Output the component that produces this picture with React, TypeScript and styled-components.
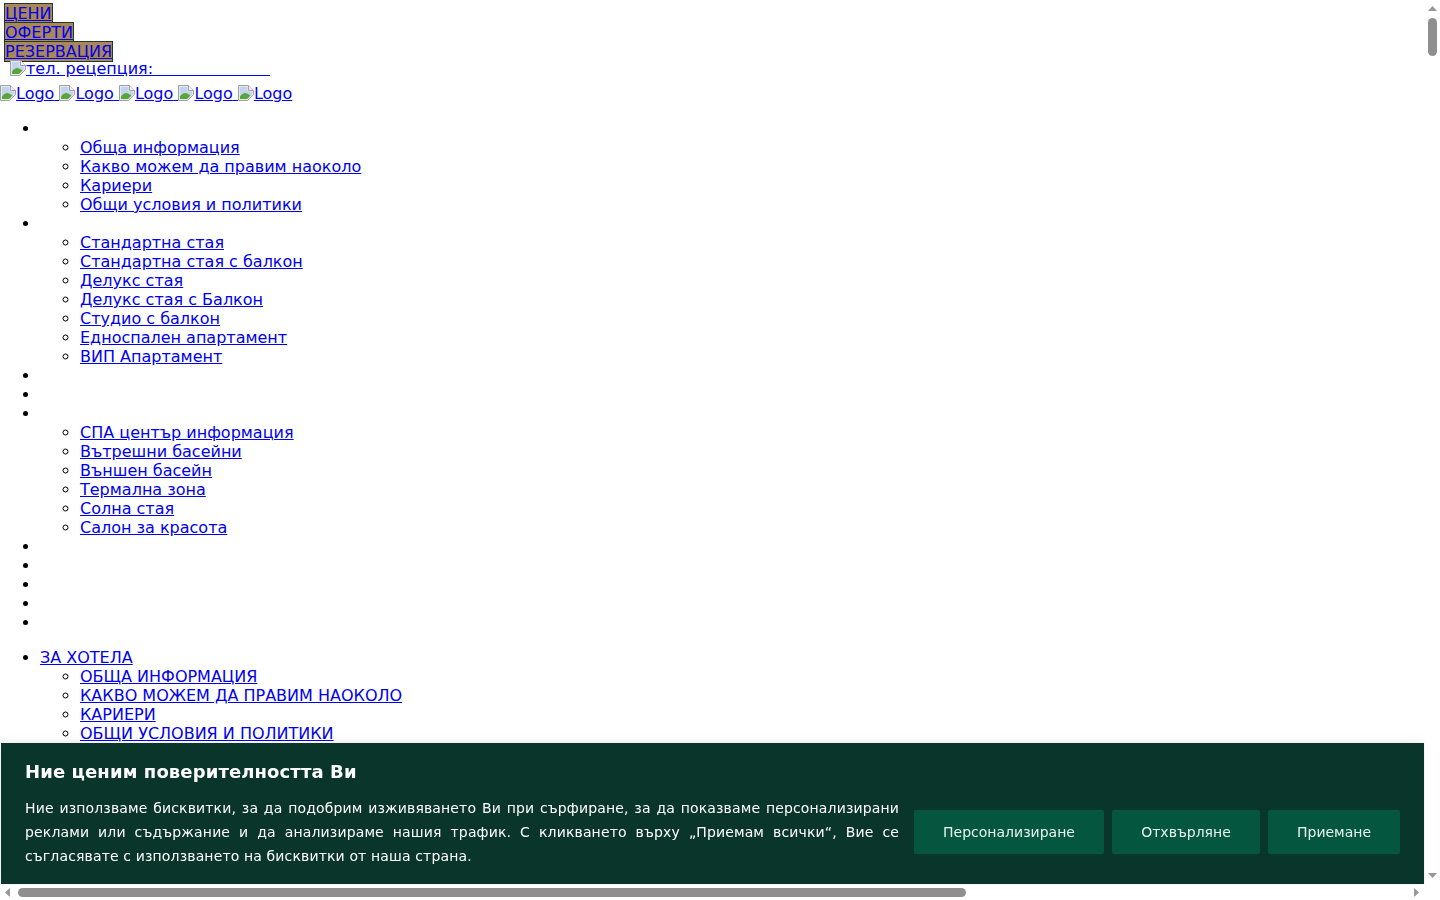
import styled, { createGlobalStyle } from "styled-components";

const quickLinks = ["ЦЕНИ", "ОФЕРТИ", "РЕЗЕРВАЦИЯ"];

type MenuItem = { label?: string; children?: string[] };

const iconMenu: MenuItem[] = [
  {
    children: [
      "Обща информация",
      "Какво можем да правим наоколо",
      "Кариери",
      "Общи условия и политики",
    ],
  },
  {
    children: [
      "Стандартна стая",
      "Стандартна стая с балкон",
      "Делукс стая",
      "Делукс стая с Балкон",
      "Студио с балкон",
      "Едноспален апартамент",
      "ВИП Апартамент",
    ],
  },
  {},
  {},
  {
    children: [
      "СПА център информация",
      "Вътрешни басейни",
      "Външен басейн",
      "Термална зона",
      "Солна стая",
      "Салон за красота",
    ],
  },
  {},
  {},
  {},
  {},
  {},
];

const textMenu: MenuItem[] = [
  {
    label: "ЗА ХОТЕЛА",
    children: [
      "ОБЩА ИНФОРМАЦИЯ",
      "КАКВО МОЖЕМ ДА ПРАВИМ НАОКОЛО",
      "КАРИЕРИ",
      "ОБЩИ УСЛОВИЯ И ПОЛИТИКИ",
    ],
  },
];

const GlobalStyle = createGlobalStyle`
  html, body {
    margin: 0;
    padding: 0;
    background: #fff;
    font-family: "DejaVu Sans", sans-serif;
    font-size: 16px;
    overflow: hidden;
  }
`;

const Page = styled.div`
  height: 900px;
  padding-top: 4px;
  box-sizing: border-box;
  overflow: hidden;
`;

const QuickLink = styled.div`
  padding-left: 4px;
  a {
    background: #a98757;
    border: 1px solid #1d3a2c;
  }
`;

const Phone = styled.div`
  margin-top: -2px;
  padding-left: 10px;
`;

const Logos = styled.div`
  margin-top: 6px;
`;

const IconSvg = styled.svg`
  vertical-align: -2px;
`;

const BrokenIcon = () => (
  <IconSvg width="16" height="16" viewBox="0 0 16 16">
    <path d="M0.5 0.5H10.5L15.5 5.5V9.5L9.5 15.5H0.5Z" fill="#e4e8f0" stroke="#a0a0a0" />
    <path d="M2 2H9.5V6.5H14V9L9 14H2Z" fill="#c3d3ee" />
    <path d="M2 14V11.5C4 8.5 7 7 9 8.5L12.5 10.5L9 14Z" fill="#58a636" />
    <path d="M10.5 0.5V5.5H15.5" fill="#f4f4f4" stroke="#a0a0a0" />
  </IconSvg>
);

const Banner = styled.section`
  position: fixed;
  left: 1px;
  bottom: 16px;
  width: 1423px;
  height: 141px;
  padding: 0 24px;
  box-sizing: border-box;
  display: flex;
  align-items: center;
  gap: 15px;
  background: #0a352a;
  color: #fff;
  box-shadow: 0 0 10px rgba(0, 0, 0, 0.1);
`;

const BannerText = styled.div`
  width: 874px;
  flex: none;
`;

const Title = styled.div`
  font-size: 18px;
  font-weight: 700;
  letter-spacing: 0.11px;
  line-height: 24px;
  margin-bottom: 12px;
`;

const Body = styled.p`
  margin: 0;
  font-size: 14px;
  line-height: 24px;
  letter-spacing: 0.14px;
  text-align: justify;
`;

const Buttons = styled.div`
  display: flex;
  gap: 8px;
  margin-top: 36px;
`;

const Button = styled.button<{ $width: number }>`
  width: ${(p) => p.$width}px;
  height: 44px;
  border: 0;
  border-radius: 2px;
  background: #04563f;
  color: #e6f5ef;
  font-family: inherit;
  font-size: 14px;
`;

const VerticalBar = styled.div`
  position: fixed;
  top: 0;
  right: 0;
  bottom: 15px;
  width: 15px;
  background: #fff;
  display: flex;
  flex-direction: column;
  align-items: center;
  padding: 6px 0 7px;
  box-sizing: border-box;
`;

const HorizontalBar = styled.div`
  position: fixed;
  left: 0;
  right: 15px;
  bottom: 0;
  height: 15px;
  background: #fff;
  display: flex;
  align-items: center;
  padding: 0 6px 0 5px;
  box-sizing: border-box;
`;

const VerticalThumb = styled.div`
  width: 9px;
  height: 38px;
  margin-top: 7px;
  margin-bottom: auto;
  border-radius: 5px;
  background: #8f8f8f;
`;

const HorizontalThumb = styled.div`
  width: 948px;
  height: 9px;
  margin-left: 8px;
  margin-right: auto;
  border-radius: 5px;
  background: #8f8f8f;
`;

const Arrow = styled.svg`
  flex: none;
  fill: #969696;
`;

const nbsp = "\u00A0".repeat(23);

function Menu({ items }: { items: MenuItem[] }) {
  return (
    <ul>
      {items.map((item, i) => (
        <li key={i}>
          {item.label ? <a href="#">{item.label}</a> : "\u00A0"}
          {item.children && (
            <ul>
              {item.children.map((child) => (
                <li key={child}>
                  <a href="#">{child}</a>
                </li>
              ))}
            </ul>
          )}
        </li>
      ))}
    </ul>
  );
}

export default function App() {
  return (
    <Page>
      <GlobalStyle />
      {quickLinks.map((link) => (
        <QuickLink key={link}>
          <a href="#">{link}</a>
        </QuickLink>
      ))}
      <Phone>
        <a href="#">
          <BrokenIcon />
          тел. рецепция:{nbsp}
        </a>
      </Phone>
      <Logos>
        {[0, 1, 2, 3, 4].map((i) => (
          <a href="#" key={i}>
            <BrokenIcon />
            Logo{i < 4 ? " " : ""}
          </a>
        ))}
      </Logos>
      <Menu items={iconMenu} />
      <Menu items={textMenu} />
      <Banner>
        <BannerText>
          <Title>Ние ценим поверителността Ви</Title>
          <Body>
            Ние използваме бисквитки, за да подобрим изживяването Ви при сърфиране, за да показваме
            персонализирани реклами или съдържание и да анализираме нашия трафик. С кликването върху
            „Приемам всички“, Вие се съгласявате с използването на бисквитки от наша страна.
          </Body>
        </BannerText>
        <Buttons>
          <Button $width={190}>Персонализиране</Button>
          <Button $width={148}>Отхвърляне</Button>
          <Button $width={132}>Приемане</Button>
        </Buttons>
      </Banner>
      <VerticalBar>
        <Arrow width="9" height="5" viewBox="0 0 9 5">
          <path d="M4.5 0L9 5H0Z" />
        </Arrow>
        <VerticalThumb />
        <Arrow width="9" height="5" viewBox="0 0 9 5">
          <path d="M0 0H9L4.5 5Z" />
        </Arrow>
      </VerticalBar>
      <HorizontalBar>
        <Arrow width="5" height="9" viewBox="0 0 5 9">
          <path d="M5 0V9L0 4.5Z" />
        </Arrow>
        <HorizontalThumb />
        <Arrow width="5" height="9" viewBox="0 0 5 9">
          <path d="M0 0L5 4.5L0 9Z" />
        </Arrow>
      </HorizontalBar>
    </Page>
  );
}
